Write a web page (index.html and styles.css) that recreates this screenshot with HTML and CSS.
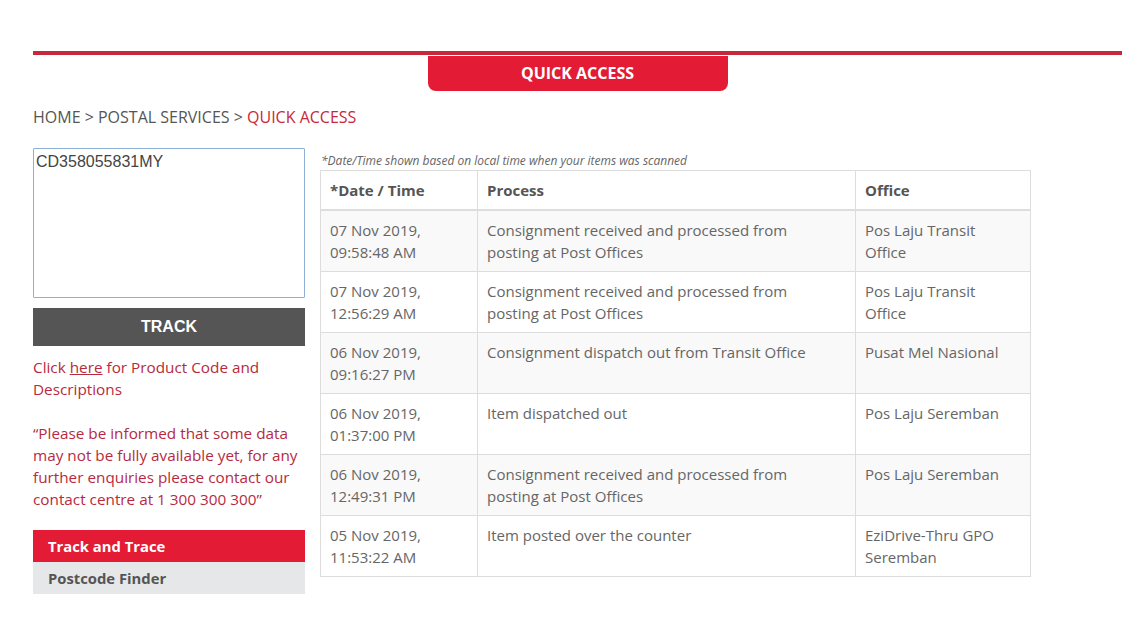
FILE: index.html
```html
<!DOCTYPE html>
<html lang="en">
<head>
<meta charset="utf-8">
<title>Quick Access - Track and Trace</title>
<link rel="stylesheet" href="styles.css">
</head>
<body>
<div class="page">
  <div class="topbar"></div>
  <div class="tab-wrap"><div class="tab">QUICK ACCESS</div></div>
  <div class="breadcrumb">HOME &gt; POSTAL SERVICES &gt; <span class="crumb-active">QUICK ACCESS</span></div>
  <div class="main">
    <aside class="side">
      <textarea class="track-input" spellcheck="false">CD358055831MY</textarea>
      <button class="track-btn">TRACK</button>
      <p class="side-text">Click <a class="here" href="#">here</a> for Product Code and Descriptions</p>
      <p class="side-text quote">“Please be informed that some data may not be fully available yet, for any further enquiries please contact our contact centre at 1 300 300 300”</p>
      <nav class="side-menu">
        <div class="menu-item active">Track and Trace</div>
        <div class="menu-item">Postcode Finder</div>
      </nav>
    </aside>
    <section class="results">
      <div class="note">*Date/Time shown based on local time when your items was scanned</div>
      <table class="track-table">
        <colgroup>
          <col class="c-date">
          <col class="c-proc">
          <col class="c-office">
        </colgroup>
        <thead>
          <tr><th>*Date / Time</th><th>Process</th><th>Office</th></tr>
        </thead>
        <tbody>
          <tr><td>07 Nov 2019, 09:58:48 AM</td><td>Consignment received and processed from posting at Post Offices</td><td>Pos Laju Transit Office</td></tr>
          <tr><td>07 Nov 2019, 12:56:29 AM</td><td>Consignment received and processed from posting at Post Offices</td><td>Pos Laju Transit Office</td></tr>
          <tr><td>06 Nov 2019, 09:16:27 PM</td><td>Consignment dispatch out from Transit Office</td><td>Pusat Mel Nasional</td></tr>
          <tr><td>06 Nov 2019, 01:37:00 PM</td><td>Item dispatched out</td><td>Pos Laju Seremban</td></tr>
          <tr><td>06 Nov 2019, 12:49:31 PM</td><td>Consignment received and processed from posting at Post Offices</td><td>Pos Laju Seremban</td></tr>
          <tr><td>05 Nov 2019, 11:53:22 AM</td><td>Item posted over the counter</td><td>EziDrive-Thru GPO Seremban</td></tr>
        </tbody>
      </table>
    </section>
  </div>
</div>
</body>
</html>
```
FILE: styles.css
```css
html, body {
  margin: 0;
  padding: 0;
  background: #fff;
}
body {
  font-family: "Open Sans", "Noto Sans", sans-serif;
  color: #555;
}
.page {
  width: 1089px;
  padding: 51px 0 0 33px;
}
.topbar {
  height: 4px;
  background: #c8283c;
}
.tab-wrap {
  display: flex;
  justify-content: center;
}
.tab {
  margin-top: 1px;
  width: 300px;
  height: 35px;
  background: #e31b35;
  color: #fff;
  font-weight: 700;
  font-size: 16px;
  line-height: 35px;
  text-align: center;
  border-radius: 0 0 8px 8px;
}
.breadcrumb {
  margin-top: 15px;
  font-size: 16px;
  line-height: 22px;
  color: #555;
}
.crumb-active {
  color: #c8283c;
}
.main {
  display: flex;
  gap: 15px;
  margin-top: 20px;
  align-items: flex-start;
}
.side {
  width: 272px;
  flex: none;
}
.track-input {
  display: block;
  box-sizing: border-box;
  width: 272px;
  height: 150px;
  margin: 0;
  padding: 4px 2px 2px;
  border: 1px solid #8eb1d8;
  border-radius: 1px;
  font-family: "Liberation Sans", Arial, sans-serif;
  font-size: 16px;
  color: #444;
  resize: none;
  outline: none;
}
.track-btn {
  display: block;
  width: 272px;
  height: 38px;
  margin-top: 10px;
  border: none;
  background: #555;
  color: #fff;
  font-family: "Liberation Sans", Arial, sans-serif;
  font-weight: 700;
  font-size: 16px;
  padding: 0;
}
.side-text {
  margin: 10px 0 0;
  font-size: 15.3px;
  line-height: 22px;
  color: #b72a3e;
}
.side-text.quote {
  margin-top: 22px;
}
.here {
  color: #b72a3e;
  text-decoration: underline;
}
.side-menu {
  margin-top: 20px;
}
.menu-item {
  height: 32px;
  line-height: 32px;
  padding-left: 15px;
  font-weight: 700;
  font-size: 14.8px;
  background: #e6e7e8;
  color: #555;
}
.menu-item.active {
  background: #e31b35;
  color: #fff;
}
.results {
  flex: none;
  width: 710px;
}
.note {
  padding-top: 4px;
  font-size: 12px;
  line-height: 17px;
  font-style: italic;
  color: #666;
  margin-bottom: 1px;
  padding-left: 1px;
}
.track-table {
  width: 710px;
  table-layout: fixed;
  border-collapse: collapse;
  font-size: 15px;
  color: #666;
}
.c-date { width: 157px; }
.c-proc { width: 378px; }
.c-office { width: 175px; }
.track-table th,
.track-table td {
  border: 1px solid #ddd;
  text-align: left;
  vertical-align: top;
  padding: 8px 20px 8px 9px;
  line-height: 22px;
}
.track-table th {
  height: 22px;
  padding-top: 8px;
  padding-bottom: 8px;
  color: #555;
  font-weight: 700;
  border-bottom: 2px solid #ddd;
}
.track-table td {
  height: 44px;
}
.track-table tbody tr:nth-child(odd) {
  background: #f9f9f9;
}
```
